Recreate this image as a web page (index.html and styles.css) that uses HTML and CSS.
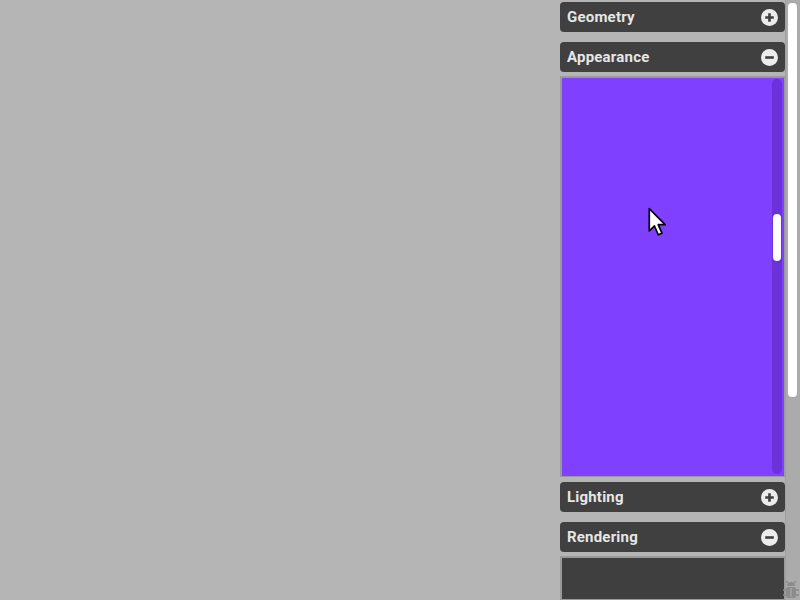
FILE: index.html
```html
<!DOCTYPE html>
<html>
<head>
<meta charset="utf-8">
<link rel="stylesheet" href="styles.css">
</head>
<body>
<div class="app">
  <div class="canvas"></div>
  <div class="panel">
    <div class="header gap-after">
      <span class="title">Geometry</span>
      <svg class="toggle" width="17" height="17" viewBox="0 0 17 17"><circle cx="8.5" cy="8.5" r="8.5" fill="#ececec"/><path d="M8.5 4.2V12.8M4.2 8.5H12.8" stroke="#404040" stroke-width="2.6"/></svg>
    </div>
    <div class="header">
      <span class="title">Appearance</span>
      <svg class="toggle" width="17" height="17" viewBox="0 0 17 17"><circle cx="8.5" cy="8.5" r="8.5" fill="#ececec"/><path d="M4.2 8.5H12.8" stroke="#404040" stroke-width="2.6"/></svg>
    </div>
    <div class="content purple">
      <div class="inner-track"><div class="inner-thumb"></div></div>
    </div>
    <div class="header gap-after">
      <span class="title">Lighting</span>
      <svg class="toggle" width="17" height="17" viewBox="0 0 17 17"><circle cx="8.5" cy="8.5" r="8.5" fill="#ececec"/><path d="M8.5 4.2V12.8M4.2 8.5H12.8" stroke="#404040" stroke-width="2.6"/></svg>
    </div>
    <div class="header">
      <span class="title">Rendering</span>
      <svg class="toggle" width="17" height="17" viewBox="0 0 17 17"><circle cx="8.5" cy="8.5" r="8.5" fill="#ececec"/><path d="M4.2 8.5H12.8" stroke="#404040" stroke-width="2.6"/></svg>
    </div>
    <div class="content dark"></div>
  </div>
  <div class="scrollbar"><div class="thumb"></div></div>
</div>
<svg class="cursor" width="24" height="32" viewBox="0 0 20 28"><path d="M1.5 1.5V21L6 16.6L9.4 24.3L12.6 22.9L9.3 15.5H15.4Z" fill="#fff" stroke="#000" stroke-width="1.5" stroke-linejoin="round"/></svg>
<svg class="bug" width="18" height="20" viewBox="0 0 18 20"><g fill="#8c8c8c"><path d="M5 6a4 4 0 0 1 8 0Z"/><rect x="4" y="7" width="10" height="11" rx="2"/></g><g stroke="#8c8c8c" stroke-width="1.3"><path d="M1 10H4M14 10H17M1 15H4M14 15H17M6 3L4 1M12 3L14 1"/></g><path d="M9 8V17" stroke="#b0b0b0" stroke-width="1"/></svg>
</body>
</html>
```
FILE: styles.css
```css
html, body {
  margin: 0;
  padding: 0;
  width: 800px;
  height: 600px;
  overflow: hidden;
  background: #b5b5b5;
  font-family: Roboto, "Noto Sans", sans-serif;
}
.app {
  display: flex;
  height: 600px;
}
.canvas {
  flex: 1;
}
.panel {
  width: 225px;
  padding-top: 2px;
  display: flex;
  flex-direction: column;
}
.header {
  height: 30px;
  flex: none;
  background: #404040;
  border-radius: 4px;
  display: flex;
  align-items: center;
  justify-content: space-between;
  padding: 0 7px 0 7px;
  box-sizing: border-box;
  margin-bottom: 4px;
}
.header.gap-after {
  margin-bottom: 10px;
}
.title {
  color: #e6e6e6;
  font-weight: bold;
  font-size: 15px;
  letter-spacing: 0.2px;
}
.toggle {
  display: block;
}
.content {
  box-sizing: border-box;
  border: 2px solid #9a9a9a;
  border-right-width: 1px;
  border-bottom-width: 1px;
}
.purple {
  height: 401px;
  flex: none;
  background: #8040ff;
  margin-bottom: 5px;
  display: flex;
  justify-content: flex-end;
  padding: 1px 2px 2px 0;
}
.inner-track {
  width: 10px;
  background: #6a32d8;
  border-radius: 5px;
  position: relative;
}
.inner-thumb {
  margin-top: 135px;
  margin-left: 1px;
  width: 8px;
  height: 47px;
  background: #fff;
  border-radius: 4px;
}
.dark {
  flex: 1;
  background: #3f3f3f;
}
.scrollbar {
  width: 15px;
  margin-left: 0;
  background: #ababab;
  border-left: 1px solid #a0a0a0;
  box-sizing: border-box;
  padding: 3px 3px 0 2px;
}
.thumb {
  width: 9px;
  height: 394px;
  background: #fff;
  border-radius: 4px;
}
.cursor {
  position: absolute;
  left: 647px;
  top: 207px;
}
.bug {
  position: absolute;
  left: 782px;
  top: 580px;
}
```
